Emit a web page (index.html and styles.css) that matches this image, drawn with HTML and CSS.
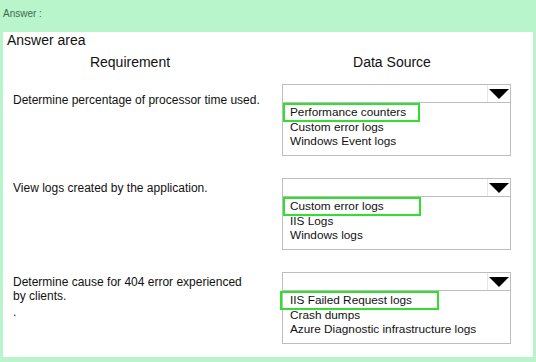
FILE: index.html
```html
<!DOCTYPE html>
<html>
<head>
<meta charset="utf-8">
<link rel="stylesheet" href="styles.css">
</head>
<body>
<div class="topbar">Answer :</div>
<div class="panel">
  <div class="title">Answer area</div>
  <div class="grid heads">
    <div class="head head-req">Requirement</div>
    <div class="head head-src">Data Source</div>
  </div>
  <div class="rows">
    <div class="grid row">
      <div class="req req-1">Determine percentage of processor time used.</div>
      <div class="dd">
        <div class="dd-head"><div class="dd-arrow"><span class="tri"></span></div></div>
        <div class="dd-list">
          <div class="hl hl-1"></div>
          <div class="item">Performance counters</div>
          <div class="item">Custom error logs</div>
          <div class="item">Windows Event logs</div>
        </div>
      </div>
    </div>
    <div class="grid row">
      <div class="req req-2">View logs created by the application.</div>
      <div class="dd">
        <div class="dd-head"><div class="dd-arrow"><span class="tri"></span></div></div>
        <div class="dd-list">
          <div class="hl hl-2"></div>
          <div class="item">Custom error logs</div>
          <div class="item">IIS Logs</div>
          <div class="item">Windows logs</div>
        </div>
      </div>
    </div>
    <div class="grid row">
      <div class="req req-3">Determine cause for 404 error experienced<br>by clients.<br><span class="dot">.</span></div>
      <div class="dd">
        <div class="dd-head"><div class="dd-arrow"><span class="tri"></span></div></div>
        <div class="dd-list">
          <div class="hl hl-3"></div>
          <div class="item">IIS Failed Request logs</div>
          <div class="item">Crash dumps</div>
          <div class="item">Azure Diagnostic infrastructure logs</div>
        </div>
      </div>
    </div>
  </div>
</div>
</body>
</html>
```
FILE: styles.css
```css
html, body {
  margin: 0;
  padding: 0;
}
body {
  background: #b9f5cb;
  font-family: "Liberation Sans", Arial, sans-serif;
  color: #111;
  width: 536px;
  height: 362px;
  overflow: hidden;
}
.topbar {
  height: 32px;
  box-sizing: border-box;
  padding: 8px 0 0 3px;
  font-size: 10px;
  line-height: 11px;
  color: #3d6b4c;
}
.panel {
  margin-left: 3px;
  width: 530px;
  height: 325px;
  background: #fff;
  box-sizing: border-box;
}
.title {
  font-size: 14px;
  line-height: 16px;
  padding-left: 4px;
}
.grid {
  display: grid;
  grid-template-columns: 279px 229px;
}
.heads {
  margin-top: 6px;
  height: 16px;
  margin-bottom: 14px;
}
.head {
  font-size: 14px;
  line-height: 16px;
  text-align: center;
}
.head-req {
  padding-right: 25px;
}
.head-src {
  padding-right: 9px;
}
.rows {
  display: flex;
  flex-direction: column;
  gap: 22px;
}
.row {
  height: 72px;
}
.req {
  padding-left: 10px;
  font-size: 12px;
  line-height: 14px;
}
.req-1 { padding-top: 9px; }
.req-2 { padding-top: 3px; }
.req-3 { padding-top: 3px; }
.dot {
  display: inline-block;
  margin-top: 2px;
}
.dd {
  display: flex;
  flex-direction: column;
}
.dd-head {
  height: 19px;
  box-sizing: border-box;
  border: 1px solid #bdbdbd;
  display: flex;
  justify-content: flex-end;
}
.dd-arrow {
  width: 22px;
  border-left: 1px solid #e6e6e6;
  display: flex;
  align-items: center;
  justify-content: center;
}
.tri {
  width: 0;
  height: 0;
  border-left: 10px solid transparent;
  border-right: 10px solid transparent;
  border-top: 10px solid #000;
}
.dd-list {
  position: relative;
  flex: 1;
  border: 1px solid #bdbdbd;
  border-top: none;
  padding-top: 2px;
}
.item {
  padding-left: 7px;
  font-size: 11.8px;
  line-height: 14.5px;
}
.hl {
  position: absolute;
  top: 0;
  height: 19px;
  box-sizing: border-box;
  border: 2px solid #2fe02f;
}
.hl-1 { left: 0; width: 137px; }
.hl-2 { left: 0; width: 138px; }
.hl-3 { left: -3px; width: 159px; }
```
